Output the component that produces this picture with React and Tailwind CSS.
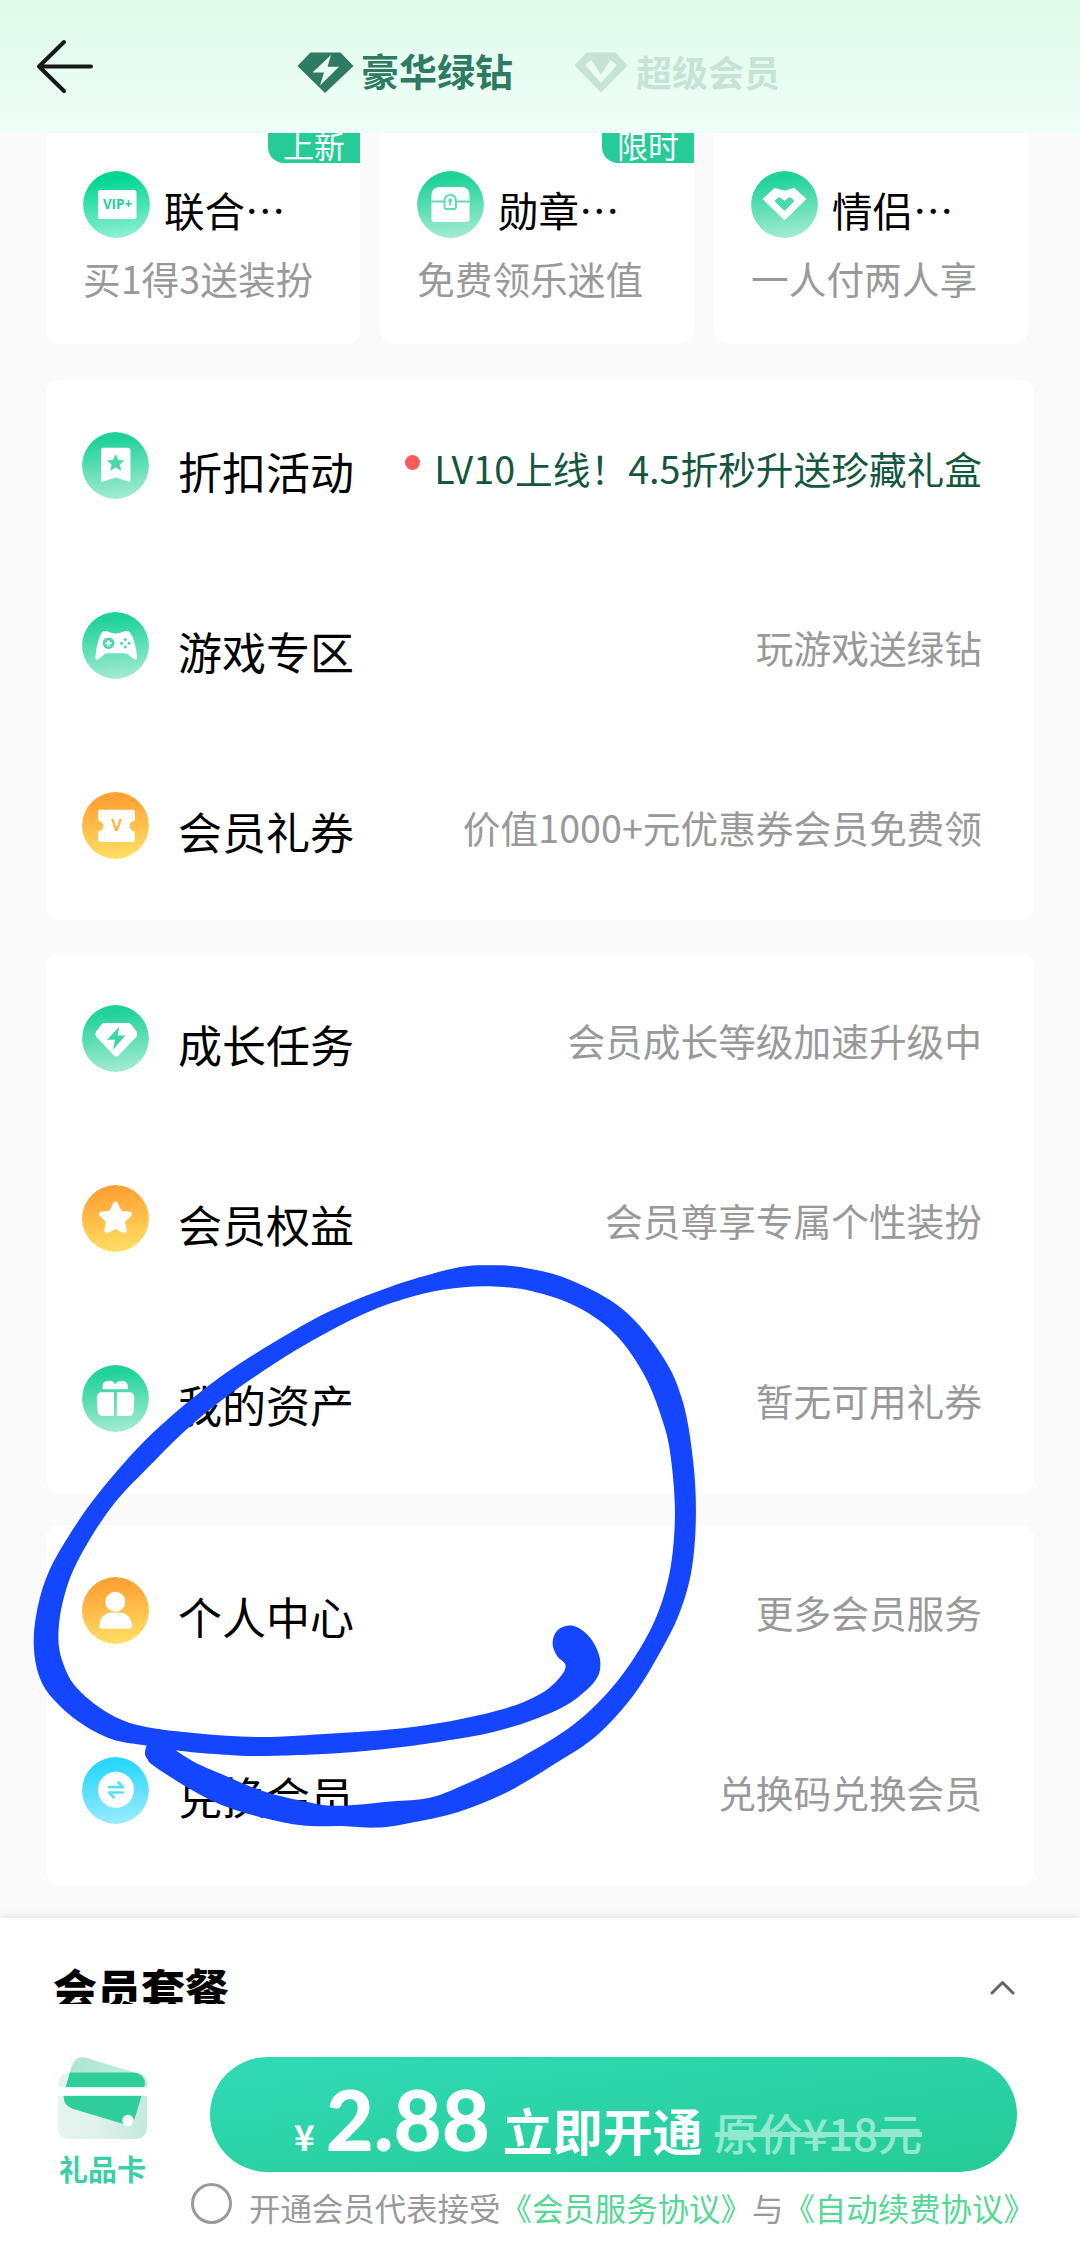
import React from 'react';

const GREEN = ['#1fd298', '#a4ecd3'];
const MINT = ['#00d68f', '#8ff0d6'];
const ORANGE = ['#ffa235', '#ffe063'];
const CYAN = ['#29d7ff', '#9becff'];

// Round gradient badge that every menu icon sits on
function RoundIcon({ id, colors, children }) {
  return (
    <svg className="w-[67px] h-[67px] shrink-0" viewBox="0 0 67 67">
      <defs>
        <linearGradient id={id} x1="0.45" y1="0.1" x2="0.55" y2="1">
          <stop offset="0" stopColor={colors[0]} />
          <stop offset="1" stopColor={colors[1]} />
        </linearGradient>
      </defs>
      <circle cx="33.5" cy="33.5" r="33.4" fill={`url(#${id})`} />
      {children}
    </svg>
  );
}

const VipIcon = () => (
  <RoundIcon id="vip" colors={MINT}>
    <rect x="15" y="19" width="38.5" height="29" rx="2.5" fill="#fff" />
    <text x="34.5" y="38" textAnchor="middle" fontFamily="Open Sans" fontWeight="700" fontSize="13.4" fill="#19d3a0">VIP+</text>
  </RoundIcon>
);

const ChestIcon = () => (
  <RoundIcon id="chest" colors={GREEN}>
    <path d="M23 16h21q8.500 0 8.500 8.500V48q0 3-3 3H17.500q-3 0-3-3V24.500q0-8.500 8.500-8.500z" fill="#fff" />
    <path d="M14.500 30.500h38" stroke="#5fdcb4" strokeWidth="1.800" />
    <path d="M27.500 30q0-6 5.700-6t5.700 6v6q0 2-2 2h-7.400q-2 0-2-2z" fill="#fff" stroke="#5fdcb4" strokeWidth="2" />
    <circle cx="33.200" cy="29.500" r="2" fill="#5fdcb4" />
    <path d="M33.200 29v5.500" stroke="#5fdcb4" strokeWidth="2" />
  </RoundIcon>
);

const CoupleIcon = () => (
  <RoundIcon id="couple" colors={GREEN}>
    <path d="M24 17.500L33.500 20.300L43 17.500L54.500 28L33.500 48.500L12.500 28z" fill="#fff" stroke="#fff" strokeWidth="1.200" strokeLinejoin="round" />
    <path d="M33.500 30.500l4-3.500h2.500l3 3-9.500 9.500-9.500-9.500 3-3h2.500z" fill="#4bdaab" stroke="#4bdaab" strokeWidth="1" strokeLinejoin="round" />
  </RoundIcon>
);

const BookmarkIcon = () => (
  <RoundIcon id="bookmark" colors={GREEN}>
    <path d="M21.500 15.800h24.500q2.500 0 2.500 2.500V48q0 2.500-2.400 1.600L33.700 45.500 21.400 49.600Q19 50.500 19 48V18.300q0-2.500 2.500-2.500z" fill="#fff" />
    <path d="M33.700 22.800l2.300 5.400 5.800.5-4.400 3.800 1.300 5.700-5-3-5 3 1.300-5.700-4.400-3.800 5.800-.5z" fill="#4bd8ab" stroke="#4bd8ab" strokeWidth="0.800" strokeLinejoin="round" />
  </RoundIcon>
);

const GamepadIcon = () => (
  <RoundIcon id="gamepad" colors={GREEN}>
    <path d="M21 19.500q2-.8 5 0l3 1.200q5 1.600 9.500 0l3-1.200q3-.8 5 0 3 1.300 5.200 8.500 3 8.500 3.300 18 .2 2.600-2.500 1.200l-7-5q-1.500-1-3.500-1H26q-2 0-3.500 1l-6 5q-3 1.400-3-1.200.2-9.500 3-18Q18.500 20.800 21 19.500z" fill="#fff" />
    <circle cx="26.500" cy="31.200" r="5.800" fill="#45d8a8" />
    <path d="M26.500 28v6.400M23.300 31.200h6.400" stroke="#fff" strokeWidth="2" />
    <circle cx="43.300" cy="27.500" r="1.500" fill="#45d8a8" />
    <circle cx="43.300" cy="34.900" r="1.500" fill="#45d8a8" />
    <circle cx="39.600" cy="31.200" r="1.500" fill="#45d8a8" />
    <circle cx="47" cy="31.200" r="1.500" fill="#45d8a8" />
  </RoundIcon>
);

const CouponIcon = () => (
  <RoundIcon id="coupon" colors={ORANGE}>
    <path d="M18 17.800h33q1.800 0 1.800 1.800v9.200a5.300 5.300 0 000 10.600v8.800q0 1.800-1.800 1.800H18q-1.800 0-1.800-1.800v-8.800a5.300 5.300 0 000-10.600v-9.200q0-1.800 1.800-1.800z" fill="#fff" />
    <text x="34.500" y="39.300" textAnchor="middle" fontFamily="Open Sans" fontWeight="700" fontSize="16.500" fill="#ffb541">V</text>
  </RoundIcon>
);

const GrowthIcon = () => (
  <RoundIcon id="growth" colors={GREEN}>
    <path d="M22.500 18h23.500q2 0 3.500 1.700l5.300 7.300q1.600 2.500-.4 4.800L37 50q-2.800 3-5.600 0L14.300 31.800q-2-2.300-.4-4.800l5.200-7.300Q20.500 18 22.500 18z" fill="#fff" />
    <path d="M37.500 21.500L25 34.800h8l-2 10L43.500 30.600h-8z" fill="#3fd6a5" />
  </RoundIcon>
);

const StarIcon = () => (
  <RoundIcon id="star" colors={ORANGE}>
    <path d="M33.500 19l4.200 8.900 9.800 1.300-7.100 6.800 1.800 9.700-8.700-4.700-8.700 4.700 1.800-9.700-7.100-6.800 9.800-1.300z" fill="#fff" stroke="#fff" strokeWidth="5" strokeLinejoin="round" />
  </RoundIcon>
);

const GiftIcon = () => (
  <RoundIcon id="gift" colors={GREEN}>
    <path d="M20.500 24.300v-2.500q0-6 6.300-6 5 0 6.700 3.600 1.700-3.600 6.300-3.600 6 0 6 6v2.500z" fill="#fff" />
    <path d="M20 27.300h12v23.800H21q-5 0-5.500-5l-.7-13q0-5.800 5.200-5.800z" fill="#fff" />
    <path d="M34.900 27.300h12.300q5.200 0 5.200 5.800l-.7 13q-.5 5-5.500 5H34.900z" fill="#fff" />
  </RoundIcon>
);

const UserIcon = () => (
  <RoundIcon id="user" colors={ORANGE}>
    <circle cx="33.300" cy="24.800" r="10" fill="#fff" />
    <path d="M28 35.500h11q9.500 1.500 11.200 13 0 3.300-3.200 3.300H20.500q-3.200 0-3.200-3.300Q18.500 37 28 35.500z" fill="#fff" />
  </RoundIcon>
);

const ExchangeIcon = () => (
  <RoundIcon id="exchange" colors={CYAN}>
    <circle cx="34" cy="32.800" r="18" fill="#fff" />
    <path d="M27 30.200h14l-4.600-4.800M41 35.500H27l4.600 4.800" fill="none" stroke="#5cdfff" strokeWidth="2.700" strokeLinecap="round" strokeLinejoin="round" />
  </RoundIcon>
);

const cards = [
  { title: '联合…', sub: '买1得3送装扮', badge: '上新', Icon: VipIcon },
  { title: '勋章…', sub: '免费领乐迷值', badge: '限时', Icon: ChestIcon },
  { title: '情侣…', sub: '一人付两人享', Icon: CoupleIcon },
];

const sections = [
  [
    { title: '折扣活动', desc: 'LV10上线！4.5折秒升送珍藏礼盒', Icon: BookmarkIcon, hot: true },
    { title: '游戏专区', desc: '玩游戏送绿钻', Icon: GamepadIcon },
    { title: '会员礼券', desc: '价值1000+元优惠券会员免费领', Icon: CouponIcon },
  ],
  [
    { title: '成长任务', desc: '会员成长等级加速升级中', Icon: GrowthIcon },
    { title: '会员权益', desc: '会员尊享专属个性装扮', Icon: StarIcon },
    { title: '我的资产', desc: '暂无可用礼券', Icon: GiftIcon },
  ],
  [
    { title: '个人中心', desc: '更多会员服务', Icon: UserIcon },
    { title: '兑换会员', desc: '兑换码兑换会员', Icon: ExchangeIcon },
  ],
];

// Contour of the marker stroke, outer edge first and then back along the inner edge
const markerPoints = [
  [280, 1298], [285, 1312], [300, 1330], [380, 1388], [450, 1428], [540, 1460], [635, 1481], [720, 1482], [800, 1486], [870, 1475],
  [980, 1447], [1090, 1397], [1190, 1330], [1290, 1255], [1375, 1150], [1440, 1030], [1480, 935], [1505, 830],
  [1514, 700], [1508, 560], [1485, 410], [1440, 295], [1350, 175], [1230, 100], [1130, 70], [1050, 64], [970, 72],
  [830, 118], [700, 177], [600, 238], [450, 345], [300, 485], [180, 635], [100, 765], [58, 857], [36, 950],
  [31, 1030], [42, 1100], [70, 1155], [130, 1217], [205, 1262], [285, 1279], [350, 1291], [450, 1301], [540, 1305],
  [710, 1298], [850, 1283], [960, 1265], [1060, 1244], [1150, 1213], [1230, 1172], [1288, 1115], [1300, 1070],
  [1288, 1025], [1265, 992], [1235, 975], [1204, 987], [1193, 1020], [1203, 1052], [1222, 1075], [1210, 1105],
  [1170, 1145], [1100, 1180], [980, 1213], [840, 1237], [700, 1248], [540, 1257], [400, 1248], [275, 1230],
  [195, 1195], [125, 1130], [95, 1065], [86, 1000], [97, 910], [130, 810], [205, 675], [300, 560], [380, 472],
  [480, 382], [620, 277], [760, 192], [860, 149], [950, 125], [1050, 117], [1150, 130], [1250, 170], [1335, 240],
  [1400, 345], [1443, 470], [1460, 570], [1467, 700], [1457, 830], [1430, 940], [1385, 1040], [1320, 1140],
  [1235, 1230], [1120, 1310], [1010, 1370], [920, 1410], [830, 1420], [710, 1431], [630, 1418], [540, 1392],
  [450, 1350], [390, 1320], [347, 1290], [310, 1268], [286, 1276],
];

// Closed Catmull-Rom spline through the points
function smoothPath(pts) {
  const n = pts.length;
  let d = `M${pts[0][0]} ${pts[0][1]}`;
  for (let i = 0; i < n; i++) {
    const p0 = pts[(i - 1 + n) % n];
    const p1 = pts[i];
    const p2 = pts[(i + 1) % n];
    const p3 = pts[(i + 2) % n];
    d += `C${p1[0] + (p2[0] - p0[0]) / 6} ${p1[1] + (p2[1] - p0[1]) / 6} ${p2[0] - (p3[0] - p1[0]) / 6} ${p2[1] - (p3[1] - p1[1]) / 6} ${p2[0]} ${p2[1]}`;
  }
  return d + 'Z';
}

function MarkerCircle() {
  return (
    <svg
      className="absolute left-[20px] top-[1240px] w-[700px] h-[620px] pointer-events-none"
      viewBox="0 0 1568 1568"
      preserveAspectRatio="none"
    >
      <path d={smoothPath(markerPoints)} fill="#1546ff" />
    </svg>
  );
}

function Header() {
  return (
    <header className="relative h-[133px] shrink-0 bg-linear-to-b from-[#defbea] to-[#f0fef8]">
      <div className="flex items-start">
        <svg className="w-[60px] h-[60px] mt-[37px] ml-[35px]" viewBox="0 0 60 60" fill="none" stroke="#161a18" strokeWidth="4" strokeLinecap="round" strokeLinejoin="round">
          <path d="M29 5L4 29.500L29 54M4 29.500H56" />
        </svg>

        {/* Tabs */}
        <svg className="w-[57px] h-[42px] mt-[52px] ml-[202px]" viewBox="0 0 57 42">
          <path d="M13.500 0.500h30L56.500 14 28 41 0.500 14z" fill="#2e7a63" />
          <path d="M34 3L15.500 20.500h11.500L23 33.500 42 14.800H30.500z" fill="#e8fcf1" />
        </svg>
        <span className="ml-[7px] mt-[51px] text-[38px] leading-[38px] font-bold text-[#2e7a63]">豪华绿钻</span>
        <svg className="w-[54px] h-[41px] mt-[52px] ml-[61px]" viewBox="0 0 54 41">
          <path d="M12.500 0.500h29L53.500 13.500 27 40.500 0.500 13.500z" fill="#c6e3d6" />
          <path d="M11 13L17.500 8 27 23 36.500 8 43 13 27 31z" fill="#eafcf3" />
        </svg>
        <span className="ml-[8px] mt-[52px] text-[36px] leading-[38px] font-bold text-[#c6e3d6]">超级会员</span>
      </div>
    </header>
  );
}

function PromoCard({ title, sub, badge, Icon }) {
  return (
    <div className="relative w-[314px] h-[211px] pt-[38px] pl-[37px] bg-white rounded-b-[14px]">
      {badge && (
        <div className="absolute top-0 right-0 w-[92px] h-[30px] overflow-hidden rounded-bl-[16px] bg-[#26cb97] pl-[15px] text-[31px] leading-[24px] text-white">
          {badge}
        </div>
      )}
      <div className="flex items-start">
        <Icon />
        <span className="ml-[14px] mt-[19px] text-[40.500px] leading-[40px] text-black">{title}</span>
      </div>
      <p className="mt-[21px] text-[37.700px] leading-[38px] text-[#999]">{sub}</p>
    </div>
  );
}

function MenuRow({ title, desc, hot, Icon }) {
  return (
    <div className="flex items-start h-[180px] pt-[52px] pl-[36px] pr-[52px]">
      <Icon />
      <span className="ml-[29px] mt-[17px] text-[44px] leading-[44px] text-black">{title}</span>
      <div className="ml-auto mt-[16px] flex items-start">
        {hot && <i className="w-[15px] h-[15px] mt-[7px] mr-[14px] rounded-full bg-[#ff5a5a]" />}
        <span className={hot ? 'mt-px text-[37.700px] leading-[38px] text-[#14573f]' : 'text-[37.700px] leading-[38px] text-[#999]'}>{desc}</span>
      </div>
    </div>
  );
}

function GiftCard() {
  return (
    <div className="flex flex-col items-center w-[89px]">
      <svg className="w-[89px] h-[82px]" viewBox="0 0 89 82">
        <defs>
          <linearGradient id="cardBack" x1="0" y1="0" x2="1" y2="0">
            <stop offset="0" stopColor="#e6f3ef" />
            <stop offset="0.4" stopColor="#e2f2ed" />
            <stop offset="1" stopColor="#c3e9dc" />
          </linearGradient>
          <linearGradient id="cardTop" x1="0" y1="0" x2="1" y2="0.3">
            <stop offset="0" stopColor="#a9e5d0" />
            <stop offset="1" stopColor="#c6efe1" />
          </linearGradient>
          <clipPath id="cardClip">
            <rect x="0" y="15.500" width="89" height="66.500" rx="11" />
          </clipPath>
        </defs>
        <rect x="0" y="15.500" width="89" height="66.500" rx="11" fill="url(#cardBack)" />
        <path d="M28 0.700L80 16.500Q88.500 20 86.500 29L76 64Q74.500 69.500 69 68L14 51.500Q4 47.500 6 37L13 11Q17-2 28 0.700z" fill="url(#cardTop)" />
        <path d="M28 0.700L80 16.500Q88.500 20 86.500 29L76 64Q74.500 69.500 69 68L14 51.500Q4 47.500 6 37L13 11Q17-2 28 0.700z" fill="#2fce9b" clipPath="url(#cardClip)" />
        <rect x="0" y="30.200" width="89" height="8.600" fill="#fff" />
        <circle cx="70" cy="63.500" r="5.700" fill="#fff" />
      </svg>
      <span className="mt-[14px] text-[29px] leading-[30px] font-bold text-[#3ccfa6] whitespace-nowrap">礼品卡</span>
    </div>
  );
}

function Footer() {
  return (
    <footer className="relative h-[346px] shrink-0 bg-white shadow-[0_-2px_8px_rgba(0,0,0,0.08)]">
      <div className="flex items-start justify-between pt-[47px] pl-[53px] pr-[65px]">
        <h2 className="h-[39px] overflow-hidden text-[44px] leading-[47px] font-black text-black">会员套餐</h2>
        <svg className="w-[25px] h-[18px] mt-[14px]" viewBox="0 0 25 18" fill="none" stroke="#666" strokeWidth="3" strokeLinecap="round" strokeLinejoin="round">
          <path d="M2 14L12.500 3.500L23 14" />
        </svg>
      </div>

      <div className="flex items-start mt-[53px] pl-[58px]">
        <GiftCard />
        <div className="ml-[44px]">
          <button className="flex items-baseline w-[807px] h-[115px] ml-[19px] pl-[84px] rounded-full bg-linear-to-br from-[#30dab6] to-[#25cb95] text-white whitespace-nowrap">
            <span className="text-[35px] leading-[40px] font-bold">¥</span>
            <span className="ml-[11px] text-[83px] leading-[125px] font-black font-[Lato]">2.88</span>
            <span className="ml-[13px] text-[50px] leading-[50px] font-bold">立即开通</span>
            <span className="ml-[12px] text-[44px] leading-[50px] font-medium text-[#93e8d0] line-through decoration-[5px]">原价¥18元</span>
          </button>

          {/* Agreement */}
          <div className="flex items-start mt-[11px]">
            <span className="w-[41px] h-[41px] rounded-full border-[3px] border-[#999]" />
            <p className="ml-[17px] mt-[9px] text-[31.450px] leading-[31px] text-[#999] whitespace-nowrap">
              开通会员代表接受<a className="text-[#55d896]">《会员服务协议》</a>与<a className="text-[#55d896]">《自动续费协议》</a>
            </p>
          </div>
        </div>
      </div>
    </footer>
  );
}

function App() {
  return (
    <div lang="zh-CN" className="relative flex flex-col w-[1080px] h-[2264px] overflow-hidden bg-[#fafafa] font-['Noto_Sans_CJK_SC',sans-serif]">
      <Header />

      <main className="grow">
        <div className="flex gap-[20px] pl-[46px]">
          {cards.map((card) => (
            <PromoCard key={card.title} {...card} />
          ))}
        </div>

        <div className="flex flex-col gap-[32.500px] mt-[36px] pl-[46px] pr-[46px]">
          {sections.map((rows, i) => (
            <section key={i} className="bg-white rounded-[14px]">
              {rows.map((row) => (
                <MenuRow key={row.title} {...row} />
              ))}
            </section>
          ))}
        </div>
      </main>

      <Footer />
      <MarkerCircle />
    </div>
  );
}

export default App;
